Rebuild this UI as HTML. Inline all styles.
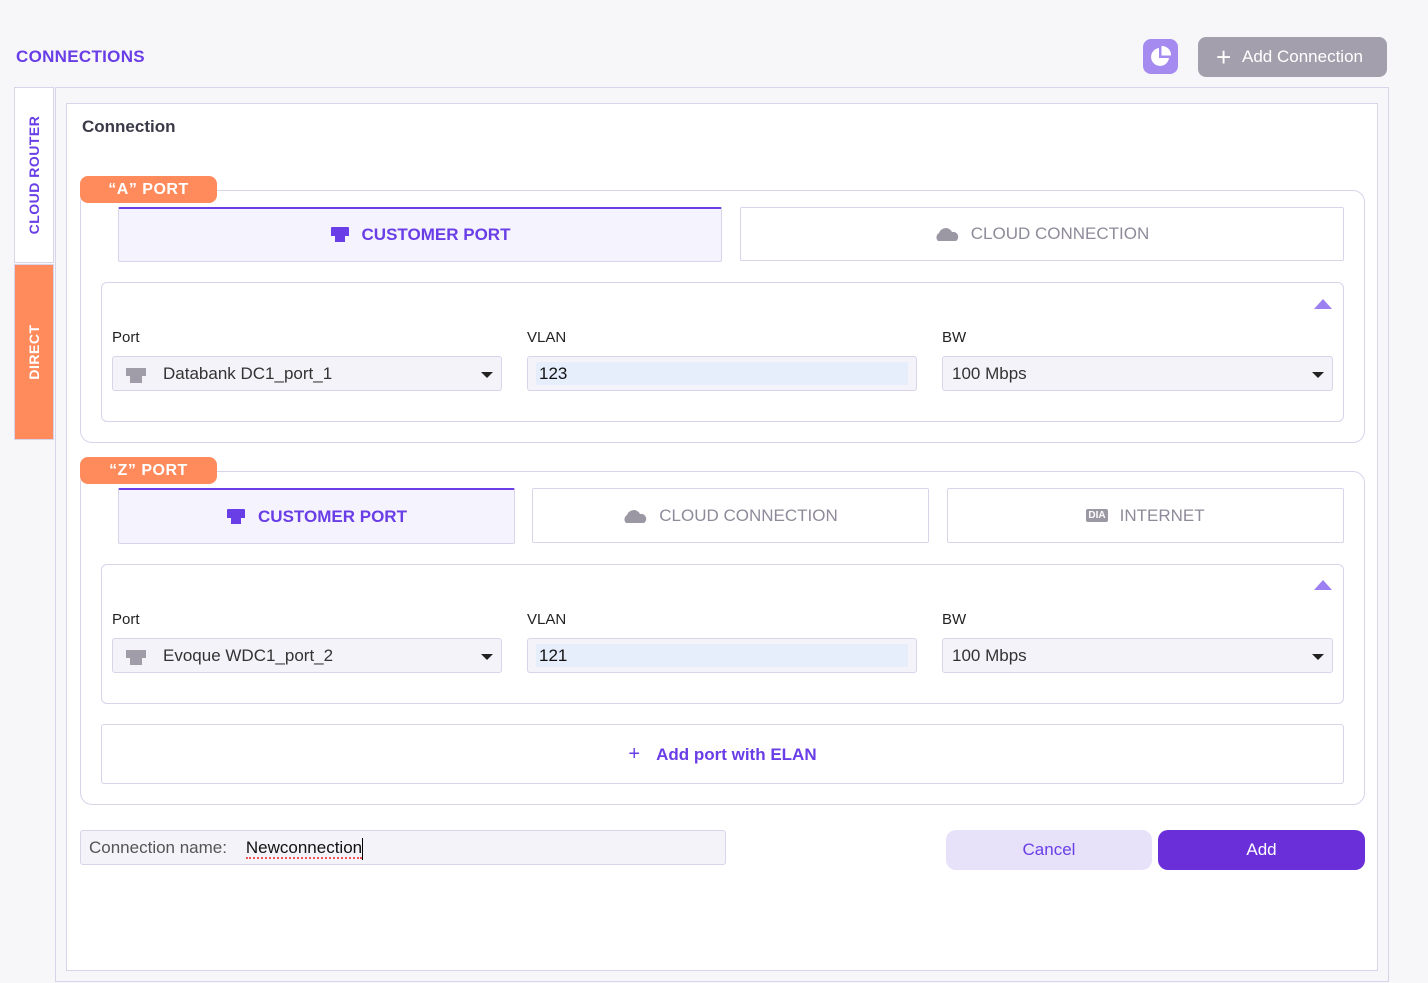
<!DOCTYPE html>
<html><head><style>
*{box-sizing:border-box;margin:0;padding:0}
body{width:1428px;height:983px;background:#f7f7fa;font-family:"Liberation Sans",sans-serif;position:relative;overflow:hidden;color:#222}
.a{position:absolute}
.title{left:16px;top:47px;color:#6a3ee6;font-size:17px;font-weight:bold;letter-spacing:.3px}
.pie{left:1143px;top:39px;width:35px;height:35px;background:#a58bf0;border-radius:8px}
.addc{left:1198px;top:37px;width:189px;height:40px;background:#a49fac;border-radius:8px;color:#fff;font-size:17px;line-height:40px;padding-left:44px}
.outer{left:55px;top:87px;width:1334px;height:895px;border:1px solid #d8d4ea;background:#f7f7fa}
.card{left:66px;top:103px;width:1312px;height:868px;border:1px solid #d8d4ea;background:#fff}
.side1{left:14px;top:87px;width:40px;height:176px;background:#fff;border:1px solid #d8d4ea}
.side2{left:14px;top:264px;width:40px;height:176px;background:#ff8a5b;border:1px solid #d8d4ea}
.vt{position:absolute;left:50%;top:50%;transform:translate(-50%,-50%) rotate(-90deg);white-space:nowrap;font-size:14px;font-weight:bold;letter-spacing:.5px}
.group{border:1px solid #d8d4ea;border-radius:12px;background:#fff}
.tag{background:#ff8a5b;color:#fff;font-weight:bold;font-size:16px;border-radius:8px;text-align:center;line-height:27px;width:137px;height:27px;letter-spacing:.5px}
.tab{border:1px solid #d8d4ea;background:#fff;color:#8f8a99;font-size:17px;display:flex;align-items:center;justify-content:center;gap:12px;border-radius:2px}
.tab.on{background:#f5f3fd;border-top:2px solid #6a3ee6;color:#6a3ee6;font-weight:bold}
.box{border:1px solid #d8d4ea;border-radius:6px;background:#fff}
.lbl{font-size:15px;color:#222}
.inp{border:1px solid #d8d4ea;background:#f4f3f9;border-radius:3px;font-size:17px;color:#333;line-height:33px;height:35px}
.caret{position:absolute;right:8px;top:15px;width:0;height:0;border-left:6px solid transparent;border-right:6px solid transparent;border-top:6px solid #222}
.up{width:0;height:0;border-left:9px solid transparent;border-right:9px solid transparent;border-bottom:10px solid #9c7ff0}
.vl{position:absolute;left:8px;top:5px;right:8px;bottom:5px;background:#e6edfb;line-height:23px;padding-left:3px;color:#111}
.btn{border-radius:10px;font-size:17px;text-align:center;line-height:40px;height:40px}
</style></head><body>
<div class="a title">CONNECTIONS</div>
<div class="a pie"><svg width="35" height="35" viewBox="0 0 35 35"><path d="M16 9 A9 9 0 1 0 26 19 L16 19 Z" fill="#fff"/><path d="M18.5 7 A9 9 0 0 1 28 16.5 L18.5 16.5 Z" fill="#fff"/></svg></div>
<div class="a addc"><span style="position:absolute;left:18px;top:0;font-size:26px;font-weight:300">+</span>Add Connection</div>
<div class="a outer"></div>
<div class="a side1"><div class="vt" style="color:#6a3ee6">CLOUD ROUTER</div></div>
<div class="a side2"><div class="vt" style="color:#fff">DIRECT</div></div>
<div class="a card"></div>
<div class="a" style="left:82px;top:117px;font-size:17px;font-weight:bold;color:#3a3a48">Connection</div>

<div class="a group" style="left:80px;top:190px;width:1285px;height:253px"></div>
<div class="a tag" style="left:80px;top:176px">“A” PORT</div>
<div class="a tab on" style="left:118px;top:207px;width:604px;height:55px"><svg width="20" height="16"><path d="M2 0h16a1 1 0 0 1 1 1v8h-4v6h-10v-6h-4v-8a1 1 0 0 1 1-1z" fill="#6a3ee6"/></svg>CUSTOMER PORT</div>
<div class="a tab" style="left:740px;top:207px;width:604px;height:54px"><svg width="24" height="16"><path d="M3 15a5 5 0 0 1 1-8 7 7 0 0 1 13-1 5 5 0 0 1 4 9z" fill="#9b97a3"/></svg>CLOUD CONNECTION</div>
<div class="a box" style="left:101px;top:282px;width:1243px;height:140px"></div>
<div class="a up" style="left:1314px;top:299px"></div>
<div class="a lbl" style="left:112px;top:329px">Port</div>
<div class="a lbl" style="left:527px;top:329px">VLAN</div>
<div class="a lbl" style="left:942px;top:329px">BW</div>
<div class="a inp" style="left:112px;top:356px;width:390px;padding-left:50px"><svg class="a" style="left:13px;top:11px" width="20" height="15"><path d="M0 0h20v8h-4v7h-12v-7h-4z" fill="#a09ca8"/></svg>Databank DC1_port_1<div class="caret"></div></div>
<div class="a inp" style="left:527px;top:356px;width:390px"><div class="vl">123</div></div>
<div class="a inp" style="left:942px;top:356px;width:391px;padding-left:9px">100 Mbps<div class="caret"></div></div>

<div class="a group" style="left:80px;top:471px;width:1285px;height:334px"></div>
<div class="a tag" style="left:80px;top:457px">“Z” PORT</div>
<div class="a tab on" style="left:118px;top:488px;width:397px;height:56px"><svg width="20" height="16"><path d="M2 0h16a1 1 0 0 1 1 1v8h-4v6h-10v-6h-4v-8a1 1 0 0 1 1-1z" fill="#6a3ee6"/></svg>CUSTOMER PORT</div>
<div class="a tab" style="left:532px;top:488px;width:397px;height:55px"><svg width="24" height="16"><path d="M3 15a5 5 0 0 1 1-8 7 7 0 0 1 13-1 5 5 0 0 1 4 9z" fill="#9b97a3"/></svg>CLOUD CONNECTION</div>
<div class="a tab" style="left:947px;top:488px;width:397px;height:55px"><span style="background:#9b97a3;color:#fff;font-size:10px;font-weight:bold;padding:1px 2px;border-radius:2px">DIA</span>INTERNET</div>
<div class="a box" style="left:101px;top:564px;width:1243px;height:140px"></div>
<div class="a up" style="left:1314px;top:580px"></div>
<div class="a lbl" style="left:112px;top:611px">Port</div>
<div class="a lbl" style="left:527px;top:611px">VLAN</div>
<div class="a lbl" style="left:942px;top:611px">BW</div>
<div class="a inp" style="left:112px;top:638px;width:390px;padding-left:50px"><svg class="a" style="left:13px;top:11px" width="20" height="15"><path d="M0 0h20v8h-4v7h-12v-7h-4z" fill="#a09ca8"/></svg>Evoque WDC1_port_2<div class="caret"></div></div>
<div class="a inp" style="left:527px;top:638px;width:390px"><div class="vl">121</div></div>
<div class="a inp" style="left:942px;top:638px;width:391px;padding-left:9px">100 Mbps<div class="caret"></div></div>
<div class="a box" style="left:101px;top:724px;width:1243px;height:60px;border-radius:3px;text-align:center;line-height:58px;color:#6a3ee6;font-weight:bold;font-size:17px"><span style="font-weight:normal;font-size:20px;margin-right:16px">+</span>Add port with ELAN</div>

<div class="a inp" style="left:80px;top:830px;width:646px;padding-left:8px;color:#555">Connection name:&nbsp;&nbsp;&nbsp; <span style="color:#111;border-bottom:2px dotted #e55;line-height:18px;display:inline-block">Newconnection</span><span style="display:inline-block;width:1px;height:22px;background:#000;vertical-align:middle"></span></div>
<div class="a btn" style="left:946px;top:830px;width:206px;background:#e7e2fa;color:#6a3ee6">Cancel</div>
<div class="a btn" style="left:1158px;top:830px;width:207px;background:#6a2fd8;color:#fff">Add</div>
</body></html>
